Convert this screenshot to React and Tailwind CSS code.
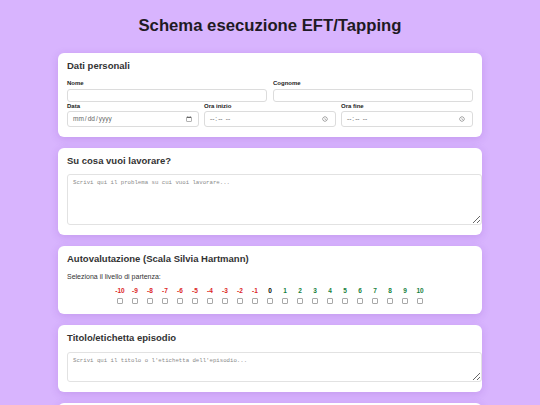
import React from "react";

const levels = [-10, -9, -8, -7, -6, -5, -4, -3, -2, -1, 0, 1, 2, 3, 4, 5, 6, 7, 8, 9, 10];

const levelColor = (n) => {
  if (n < 0) return "text-[#dc2626]";
  if (n > 0) return "text-[#15803d]";
  return "text-black";
};

const Card = ({ title, children, className = "pb-[9px]" }) => (
  <section className={`rounded-[6px] bg-white px-[9px] pt-[7px] shadow-[0_2px_8px_rgba(110,40,170,0.18)] ${className}`}>
    <h2 className="text-[9.5px] font-bold leading-[12px] text-[#333]">{title}</h2>
    {children}
  </section>
);

const Label = ({ children, className = "" }) => (
  <label className={`block text-[6px] font-bold leading-[8px] text-[#222] ${className}`}>
    {children}
  </label>
);

const inputBase =
  "block w-full rounded-[3px] border border-[#dcdcdc] bg-white px-[4px] text-[6.5px] text-[#666] outline-none";

const pickerIcon =
  "[&::-webkit-calendar-picker-indicator]:h-[6px] [&::-webkit-calendar-picker-indicator]:w-[6px] [&::-webkit-calendar-picker-indicator]:opacity-60";

const areaBase =
  "block w-[415px] rounded-[3px] border border-[#e2e2e2] px-[5px] py-[4px] font-['Liberation_Mono',monospace] text-[5.7px] leading-[8px] outline-none placeholder:text-[#8a8a8a]";

export default function App() {
  return (
    <div className="min-h-screen bg-[#d8b4fe] pb-10 font-['Liberation_Sans',Arial,sans-serif]">
      <h1 className="pt-[16px] text-center text-[16.7px] font-bold leading-[20px] text-[#1f1a24]">
        Schema esecuzione EFT/Tapping
      </h1>

      <main className="mx-auto mt-[17px] flex w-[424px] flex-col gap-[11px]">
        {/* Dati personali */}
        <Card title="Dati personali" className="pb-[10px]">
          <div className="mt-[7px] grid grid-cols-2 gap-x-[6px]">
            <div>
              <Label className="mb-[2px]">Nome</Label>
              <input type="text" className={`${inputBase} h-[13px]`} />
            </div>
            <div>
              <Label className="mb-[2px]">Cognome</Label>
              <input type="text" className={`${inputBase} h-[13px]`} />
            </div>
          </div>
          <div className="grid grid-cols-3 gap-x-[5px]">
            <div>
              <Label className="mb-[1px]">Data</Label>
              <input type="date" className={`${inputBase} ${pickerIcon} h-[16px]`} />
            </div>
            <div>
              <Label className="mb-[1px]">Ora inizio</Label>
              <input type="time" className={`${inputBase} ${pickerIcon} h-[16px]`} />
            </div>
            <div>
              <Label className="mb-[1px]">Ora fine</Label>
              <input type="time" className={`${inputBase} ${pickerIcon} h-[16px]`} />
            </div>
          </div>
        </Card>

        {/* Problema */}
        <Card title="Su cosa vuoi lavorare?" className="pb-[10px]">
          <textarea
            placeholder="Scrivi qui il problema su cui vuoi lavorare..."
            className={`${areaBase} mt-[7px] h-[51px]`}
          />
        </Card>

        {/* Autovalutazione */}
        <Card title="Autovalutazione (Scala Silvia Hartmann)" className="pb-[10px]">
          <p className="mt-[7px] text-[7px] leading-[9px] text-[#333]">Seleziona il livello di partenza:</p>
          <div className="mt-[6px] flex justify-center">
            {levels.map((n) => (
              <label key={n} className="flex w-[15px] flex-col items-center">
                <span className={`text-[6.5px] font-bold leading-[8px] ${levelColor(n)}`}>{n}</span>
                <input
                  type="checkbox"
                  className="mt-[3px] h-[6px] w-[6px] appearance-none rounded-[1px] border border-[#a8a8a8] bg-white"
                />
              </label>
            ))}
          </div>
        </Card>

        {/* Titolo */}
        <Card title="Titolo/etichetta episodio" className="pb-[10px]">
          <textarea
            placeholder="Scrivi qui il titolo o l'etichetta dell'episodio..."
            className={`${areaBase} mt-[8px] h-[30px]`}
          />
        </Card>

        {/* Frase di impostazione */}
        <Card title="Frase di impostazione" className="pb-[10px]">
          <textarea placeholder="Anche se..." className={`${areaBase} mt-[8px] h-[30px]`} />
        </Card>
      </main>
    </div>
  );
}
